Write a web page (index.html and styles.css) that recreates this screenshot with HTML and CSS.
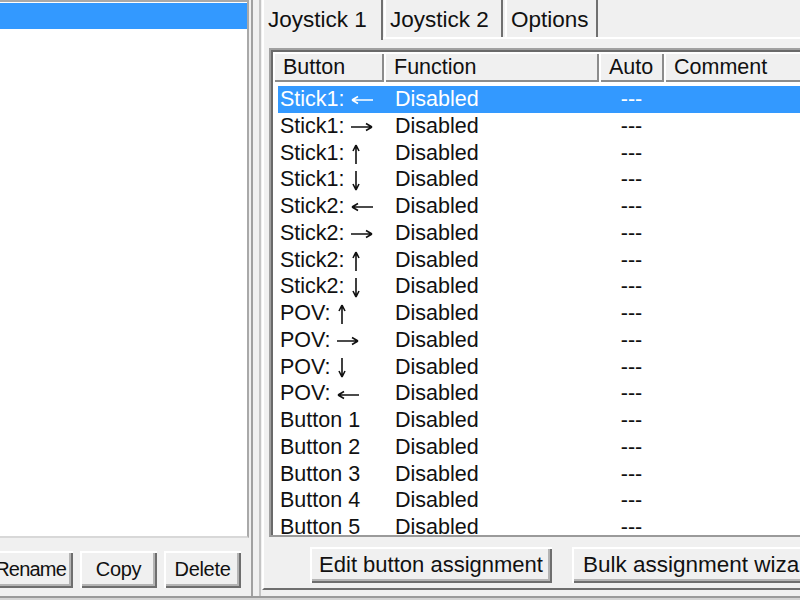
FILE: index.html
```html
<html>
<head>
  <meta name="viewport" content="width=device-width, initial-scale=1.0">
  <link rel="stylesheet" href="styles.css">
</head>
<body>
  <div class="window">
    <div class="left">
      <div class="listbox">
        <div class="lbSel"></div>
      </div>
      <div class="leftBtns">
        <button class="btn small rename">Rename</button>
        <button class="btn small">Copy</button>
        <button class="btn small">Delete</button>
      </div>
    </div>

    <div class="split"></div>

    <div class="right">
      <div class="tabs">
        <div class="tab t1 active">Joystick 1</div>
        <div class="tab t2">Joystick 2</div>
        <div class="tab t3">Options</div>
      </div>

      <div class="panel">
        <div class="listview">
          <div class="header">
            <div class="hcell c1">Button</div>
            <div class="hcell c2">Function</div>
            <div class="hcell c3">Auto</div>
            <div class="hcell c4">Comment</div>
          </div>
          <div class="rows">
            <div class="row selected"><span class="c1">Stick1: <svg class="ah" viewBox="0 0 22 10"><path d="M1 5H22M1 5L7 1.5M1 5L7 8.5"/></svg></span><span class="c2">Disabled</span><span class="c3">---</span></div>
            <div class="row"><span class="c1">Stick1: <svg class="ah" viewBox="0 0 22 10"><path d="M0 5H21M21 5L15 1.5M21 5L15 8.5"/></svg></span><span class="c2">Disabled</span><span class="c3">---</span></div>
            <div class="row"><span class="c1">Stick1: <svg class="av" viewBox="0 0 10 20"><path d="M5 1V20M5 1L2 7M5 1L8 7"/></svg></span><span class="c2">Disabled</span><span class="c3">---</span></div>
            <div class="row"><span class="c1">Stick1: <svg class="av" viewBox="0 0 10 20"><path d="M5 0V19M5 19L2 13M5 19L8 13"/></svg></span><span class="c2">Disabled</span><span class="c3">---</span></div>
            <div class="row"><span class="c1">Stick2: <svg class="ah" viewBox="0 0 22 10"><path d="M1 5H22M1 5L7 1.5M1 5L7 8.5"/></svg></span><span class="c2">Disabled</span><span class="c3">---</span></div>
            <div class="row"><span class="c1">Stick2: <svg class="ah" viewBox="0 0 22 10"><path d="M0 5H21M21 5L15 1.5M21 5L15 8.5"/></svg></span><span class="c2">Disabled</span><span class="c3">---</span></div>
            <div class="row"><span class="c1">Stick2: <svg class="av" viewBox="0 0 10 20"><path d="M5 1V20M5 1L2 7M5 1L8 7"/></svg></span><span class="c2">Disabled</span><span class="c3">---</span></div>
            <div class="row"><span class="c1">Stick2: <svg class="av" viewBox="0 0 10 20"><path d="M5 0V19M5 19L2 13M5 19L8 13"/></svg></span><span class="c2">Disabled</span><span class="c3">---</span></div>
            <div class="row"><span class="c1">POV: <svg class="av" viewBox="0 0 10 20"><path d="M5 1V20M5 1L2 7M5 1L8 7"/></svg></span><span class="c2">Disabled</span><span class="c3">---</span></div>
            <div class="row"><span class="c1">POV: <svg class="ah" viewBox="0 0 22 10"><path d="M0 5H21M21 5L15 1.5M21 5L15 8.5"/></svg></span><span class="c2">Disabled</span><span class="c3">---</span></div>
            <div class="row"><span class="c1">POV: <svg class="av" viewBox="0 0 10 20"><path d="M5 0V19M5 19L2 13M5 19L8 13"/></svg></span><span class="c2">Disabled</span><span class="c3">---</span></div>
            <div class="row"><span class="c1">POV: <svg class="ah" viewBox="0 0 22 10"><path d="M1 5H22M1 5L7 1.5M1 5L7 8.5"/></svg></span><span class="c2">Disabled</span><span class="c3">---</span></div>
            <div class="row"><span class="c1">Button 1</span><span class="c2">Disabled</span><span class="c3">---</span></div>
            <div class="row"><span class="c1">Button 2</span><span class="c2">Disabled</span><span class="c3">---</span></div>
            <div class="row"><span class="c1">Button 3</span><span class="c2">Disabled</span><span class="c3">---</span></div>
            <div class="row"><span class="c1">Button 4</span><span class="c2">Disabled</span><span class="c3">---</span></div>
            <div class="row"><span class="c1">Button 5</span><span class="c2">Disabled</span><span class="c3">---</span></div>
          </div>
        </div>
        <div class="panelBtns">
          <button class="btn wide">Edit button assignment</button>
          <button class="btn wide bulk">Bulk assignment wizard</button>
        </div>
      </div>
    </div>
  </div>
  <div class="footer"></div>
</body>
</html>
```

FILE: styles.css
```css
  html, body { margin: 0; padding: 0; }
  body {
    width: 800px;
    height: 600px;
    overflow: hidden;
    background-color: #f0f0f0;
    font-family: "Liberation Sans", Arial, sans-serif;
    font-size: 21.5px;
    color: #111;
  }

  .window {
    display: flex;
    height: 596px;
  }

  /* left profile list */
  .left {
    width: 250px;
    flex: none;
    display: flex;
    flex-direction: column;
  }
  .listbox {
    height: 538px;
    width: 249px;
    box-sizing: border-box;
    background-color: #fff;
    border-top: 2px solid #a9a9a9;
    border-right: 2px solid #a9a9a9;
    border-bottom: 2px solid #d8d8d8;
    padding-top: 1px;
  }
  .lbSel {
    height: 26px;
    background-color: #3399ff;
  }
  .leftBtns {
    display: flex;
    gap: 7px;
    margin-top: 13px;
    margin-left: -24px;
  }

  .btn {
    font-family: "Liberation Sans", Arial, sans-serif;
    font-size: 22px;
    color: #111;
    background-color: #f0f0f0;
    border: none;
    padding: 0;
    box-shadow: inset 2px 2px #fff, inset -2px -2px #6e6e6e, inset -4px -4px #b4b4b4;
    text-align: center;
    flex: none;
  }
  .small {
    width: 77px;
    height: 37px;
    font-size: 20px;
    letter-spacing: -0.3px;
  }
  .small.rename {
    width: 97px;
    text-align: right;
    padding-right: 7px;
    letter-spacing: -0.8px;
  }
  .wide {
    width: 242px;
    height: 36px;
  }
  .bulk {
    width: 260px;
    text-align: left;
    padding-left: 11px;
    white-space: nowrap;
    overflow: hidden;
    font-size: 22.5px;
  }

  .split {
    width: 6px;
    flex: none;
    margin-left: 1px;
    border-left: 2px solid #a0a0a0;
    border-right: 2px solid #c4c4c4;
  }

  /* right side: tabs */
  .right {
    flex: 1;
    display: flex;
    flex-direction: column;
    padding-left: 1px;
    min-width: 0;
  }
  .tabs {
    display: flex;
    align-items: flex-end;
    height: 37px;
    position: relative;
    z-index: 1;
  }
  .tab {
    height: 37px;
    line-height: 40px;
    box-sizing: border-box;
    padding-left: 4px;
    border-left: 2px solid #fff;
    border-right: 2px solid #707070;
    background-color: #f0f0f0;
    white-space: nowrap;
    font-size: 22.5px;
    color: #111;
    flex: none;
  }
  .t1 { width: 121px; }
  .t2 { width: 119px; margin-left: 1px; }
  .t3 { width: 93px; margin-left: 2px; }
  .tab.active {
    height: 40px;
    line-height: 40px;
    margin-bottom: -3px;
    padding-bottom: 3px;
  }

  .panel {
    flex: 1;
    border-top: 2px solid #fff;
    border-left: 2px solid #fff;
    border-bottom: 2px solid #6e6e6e;
    margin-bottom: 6px;
    padding: 9px 0 0 5px;
    display: flex;
    flex-direction: column;
    min-width: 0;
  }

  /* list view */
  .listview {
    height: 489px;
    box-sizing: border-box;
    border-top: 2px solid #a0a0a0;
    border-left: 2px solid #a0a0a0;
    border-bottom: 2px solid #9a9a9a;
    box-shadow: inset 2px 2px #6a6a6a;
    padding: 2px 0 0 2px;
    background-color: #fff;
    overflow: hidden;
    flex: none;
  }
  .header {
    display: flex;
    height: 30px;
    background-color: #f0f0f0;
  }
  .hcell {
    box-sizing: border-box;
    height: 30px;
    line-height: 30px;
    padding-left: 10px;
    box-shadow: inset 2px 2px #fff, inset -2px -2px #8c8c8c;
    white-space: nowrap;
    flex: none;
  }
  .hcell.c1 { width: 111px; }
  .hcell.c2 { width: 215px; }
  .hcell.c3 { width: 65px; }
  .hcell.c4 { width: 200px; }

  .rows {
    padding-top: 4px;
    padding-left: 5px;
  }
  .row {
    display: flex;
    height: 26.75px;
    line-height: 26.75px;
    white-space: nowrap;
  }
  .row.selected {
    background-color: #3399ff;
    color: #fff;
  }
  .row .c1 {
    width: 106px;
    padding-left: 2px;
    box-sizing: border-box;
    flex: none;
  }
  .row .c2 {
    width: 215px;
    padding-left: 11px;
    box-sizing: border-box;
    flex: none;
  }
  .row .c3 {
    width: 65px;
    text-align: center;
    flex: none;
  }

  /* arrow glyphs */
  .ah, .av {
    fill: none;
    stroke: currentColor;
    stroke-width: 1.6;
    vertical-align: middle;
  }
  .ah {
    width: 22px;
    height: 10px;
  }
  .av {
    width: 10px;
    height: 20px;
  }

  .panelBtns {
    display: flex;
    gap: 20px;
    margin-top: 10px;
    padding-left: 41px;
  }

  .footer {
    height: 4px;
    border-top: 2px solid #9a9a9a;
    background-color: #d4d4d4;
  }
```
